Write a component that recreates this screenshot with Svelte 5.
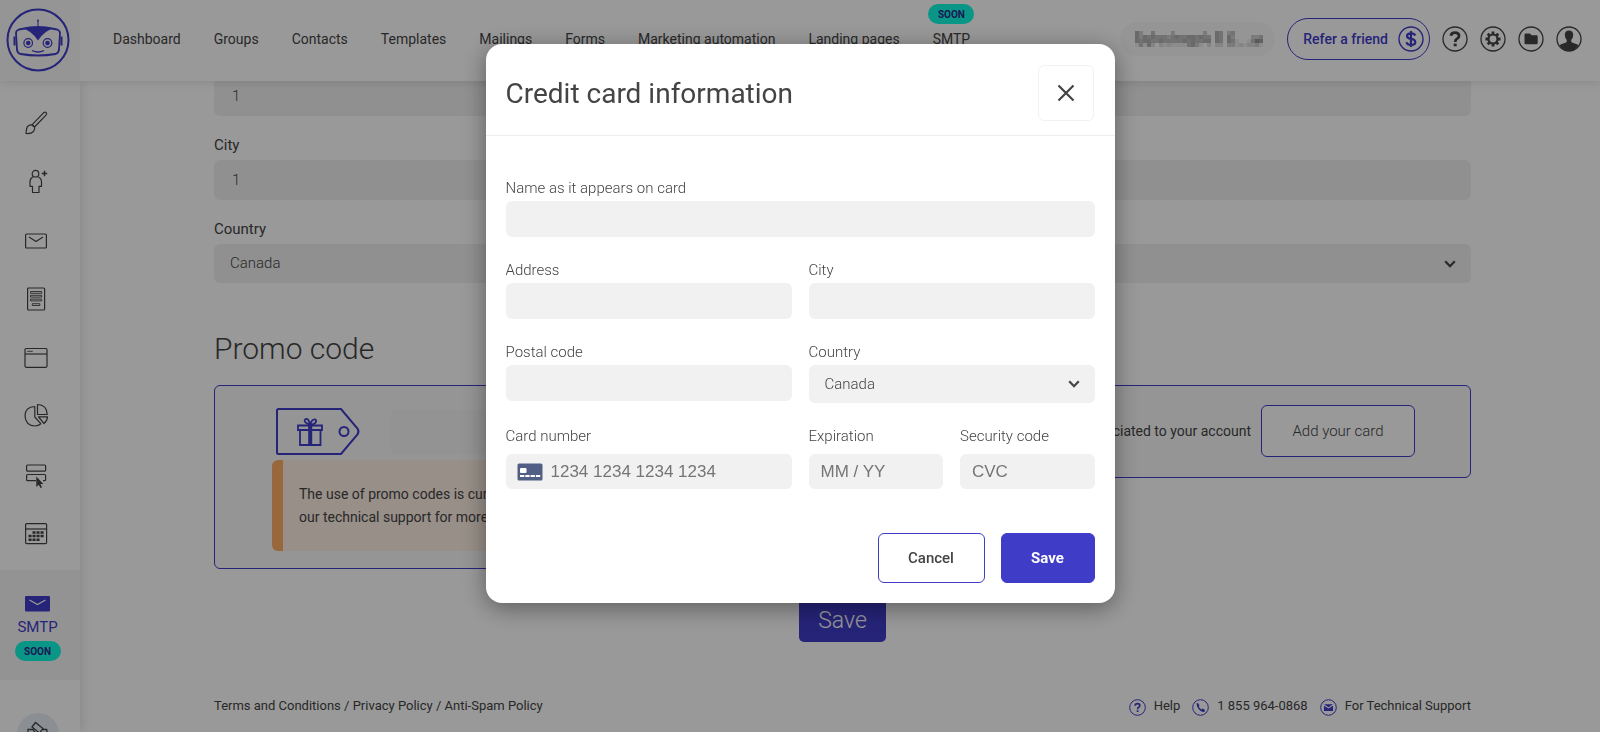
<script>
  const navItems = ['Dashboard', 'Groups', 'Contacts', 'Templates', 'Mailings', 'Forms', 'Marketing automation', 'Landing pages', 'SMTP'];
  const sideItems = ['design', 'contact', 'mail', 'form', 'window', 'chart', 'landing', 'calendar'];

  // Opacity levels (0-9) of the masked account name, one digit per cell.
  const mask = [
    '530040000300000003005403400000000',
    '535454443454455454405405300003340',
    '545544544444545445505405410014760',
    '141520212111145310202203312122310'
  ];
</script>

<div class="page">
  <header class="topbar">
    <a class="logo" href="#home" aria-label="Home">
      <svg width="66" height="66" viewBox="0 0 66 66" fill="none" stroke="#3f3cc8">
        <circle cx="33" cy="33" r="30.5" stroke-width="2" />
        <path d="M14 22.500Q33 18 52 22.500Q55 23.500 55 26L54 43Q53.500 46 50.500 47Q33 50 15.500 47Q12.500 46 12 43L11 26Q11 23.500 14 22.500Z" stroke-width="1.800" />
        <path d="M17 21.500Q33 17 49 21.500Q40 23 33 33.500Q26 23 17 21.500Z" fill="#3f3cc8" stroke="none" />
        <path d="M33 20V14" stroke-width="1" />
        <circle cx="33" cy="13.500" r="1" fill="#3f3cc8" stroke="none" />
        <circle cx="23.200" cy="36" r="4.300" stroke-width="1.200" />
        <circle cx="42.500" cy="36" r="4.300" stroke-width="1.200" />
        <circle cx="23.200" cy="36" r="2.300" fill="#3f3cc8" stroke="none" />
        <circle cx="42.500" cy="36" r="2.300" fill="#3f3cc8" stroke="none" />
        <path d="M27 43.500Q33 46.500 39 43.500" stroke-width="1.300" />
        <path d="M9.500 29.500V38.500M56.500 29.500V38.500" stroke-width="2" />
      </svg>
    </a>
    <nav class="menu">
      {#each navItems as item}
        <a href="#nav">{item}{#if item === 'SMTP'}<span class="soon above">SOON</span>{/if}</a>
      {/each}
    </nav>
    <div class="tools">
      <button class="account" aria-label="Account">
        <svg width="132" height="16" viewBox="0 0 132 16" shape-rendering="crispEdges">
          {#each mask as row, y}
            {#each row.split('') as level, x}
              <rect x={x * 4} y={y * 4} width="4" height="4" fill="#222" opacity={Number(level) / 15} />
            {/each}
          {/each}
        </svg>
      </button>
      <button class="refer">Refer a friend
        <svg width="26" height="26" viewBox="0 0 26 26" aria-hidden="true">
          <circle cx="13" cy="13" r="12" fill="none" stroke="#3f3cc8" stroke-width="1.400" />
          <path d="M17.300 9.500Q16.500 7.300 13 7.300Q9 7.300 9 10Q9 12.200 13 12.900Q17.300 13.600 17.300 16.200Q17.300 18.900 13 18.900Q9.200 18.900 8.500 16.200M13 5V21" fill="none" stroke="#3f3cc8" stroke-width="2.200" />
        </svg>
      </button>
      <button class="round" aria-label="Help">
        <svg width="26" height="26" viewBox="0 0 26 26" fill="none" stroke="#444">
          <circle cx="13" cy="13" r="12" stroke-width="1.300" />
          <path d="M8.900 9.800Q9.300 6.700 13 6.700Q17 6.700 17 9.900Q17 11.600 14.900 12.900Q13.200 14 13.200 16" stroke-width="2.800" />
          <path d="M11.700 17.600H14.700V20.300H11.700Z" fill="#444" stroke="none" />
        </svg>
      </button>
      <button class="round" aria-label="Settings">
        <svg width="26" height="26" viewBox="0 0 26 26" fill="none" stroke="#444">
          <circle cx="13" cy="13" r="12" stroke-width="1.300" />
          <circle cx="13" cy="13" r="4.500" stroke-width="2.200" />
          <path d="M13 5.500V8.500M13 17.500V20.500M5.500 13H8.500M17.500 13H20.500M7.700 7.700L9.800 9.800M16.200 16.200L18.300 18.300M18.300 7.700L16.200 9.800M9.800 16.200L7.700 18.300" stroke-width="2.800" />
        </svg>
      </button>
      <button class="round" aria-label="Files">
        <svg width="26" height="26" viewBox="0 0 26 26">
          <circle cx="13" cy="13" r="12" fill="none" stroke="#444" stroke-width="1.300" />
          <path d="M6.500 8.700Q6.500 7.500 7.700 7.500H11.500Q12.200 7.500 12.700 8.200L13.500 9.300H18.500Q19.700 9.300 19.700 10.500V17Q19.700 18.200 18.500 18.200H7.700Q6.500 18.200 6.500 17Z" fill="#444" />
        </svg>
      </button>
      <button class="round" aria-label="Profile">
        <svg width="26" height="26" viewBox="0 0 26 26">
          <circle cx="13" cy="13" r="12" fill="none" stroke="#444" stroke-width="1.300" />
          <path d="M13 4.500Q17.200 4.500 17.200 9Q17.200 12 15.200 14Q15 16 16 16.500L21.500 18.600Q22.300 19 22 20Q18.500 25 13 25Q7.500 25 4 20Q3.700 19 4.500 18.600L10 16.500Q11 16 10.800 14Q8.800 12 8.800 9Q8.800 4.500 13 4.500Z" fill="#444" />
        </svg>
      </button>
    </div>
  </header>

  <div class="body">
    <aside class="sidebar">
      <ul class="side-list">
        {#each sideItems as item}
          <li>
            <a href="#side" aria-label={item}>
              <svg width="26" height="26" viewBox="0 0 26 26" fill="none" stroke="#444" stroke-width="1.200" stroke-linejoin="round">
                {#if item === 'design'}
                  <path d="M9 14.800L20.500 2.800Q22 1.700 23.200 2.600Q24.200 3.700 23 5.200L11.500 17Z" />
                  <path d="M9 14.800Q5 14.500 3.800 18Q3.200 20.500 3 23.500Q8 24 10.500 21.500Q12.300 19.500 11.500 17Z" />
                {:else if item === 'contact'}
                  <circle cx="12.500" cy="4.700" r="3.300" />
                  <path d="M9.800 8Q7 9.300 7 13V17.300H9.500V23.500H16V17.300H18.500V13Q18.500 9.300 15.300 8" />
                  <path d="M18.700 4.500H24.200M21.500 1.800V7.200" stroke-width="1.500" />
                {:else if item === 'mail'}
                  <rect x="2.600" y="6" width="20.800" height="14" rx="1" />
                  <path d="M6 9L13 13.500L20 9" />
                {:else if item === 'form'}
                  <rect x="4.600" y="2" width="17" height="22" rx="1" />
                  <path d="M7.500 5.500H18.700V7.300H7.500ZM7.500 9.300H18.700V11.100H7.500ZM7.500 13.100H18.700V14.900H7.500ZM9.300 17.700H16.900V19.500H9.300Z" stroke-width=".9" />
                {:else if item === 'window'}
                  <rect x="2" y="3.500" width="22" height="18.800" rx="1.200" />
                  <path d="M2 9H24" />
                  <path d="M4.500 6.300H9.500" stroke-dasharray="1.300 .6" />
                {:else if item === 'chart'}
                  <path d="M11.800 3.500Q2 4 2 13Q2.500 22.500 12 23Q15.500 22.900 17.800 20.700L11.800 14Z" />
                  <path d="M14.500 1.500Q24 2 24.200 11.500H14.500Z" />
                  <path d="M15.500 13.800H24.500Q24.300 18 21 20.500Z" />
                {:else if item === 'landing'}
                  <rect x="3.600" y="3" width="19" height="6.200" rx="1" />
                  <path d="M13 18.700H4.600Q3.600 18.700 3.600 17.700V13.500Q3.600 12.500 4.600 12.500H21.600Q22.600 12.500 22.600 13.500V17.700Q22.600 18.700 20 18.700" />
                  <path d="M13.300 14.500V25L15.700 22.700L17.500 26L19 25.200L17.400 22H20.400Z" fill="#444" stroke="none" />
                {:else}
                  <rect x="2.600" y="2.600" width="21" height="20" rx="1" />
                  <path d="M2.600 8H23.600" />
                  <path d="M9.500 11.500H21M5.500 15H21M5.500 18.700H17" stroke-width="2.600" stroke-dasharray="3.100 .9" />
                {/if}
              </svg>
            </a>
          </li>
        {/each}
      </ul>
      <a class="smtp" href="#smtp">
        <svg width="26" height="17" viewBox="0 0 26 17" aria-hidden="true">
          <rect x="0" y="1" width="25" height="15.500" rx="1.200" fill="#3f3cc8" />
          <path d="M4.500 5L12.500 9.500L20.500 5" fill="none" stroke="#fff" stroke-width="1.200" />
        </svg>
        <span>SMTP</span>
        <span class="soon">SOON</span>
      </a>
      <a class="partner" href="#partner" aria-label="Partners">
        <svg width="26" height="26" viewBox="0 0 26 26" fill="none" stroke="#444" stroke-width="1.300">
          <path d="M7 6L10.500 1.500L18 7.500L14.500 12ZM3 8.500H8L11 13L8 16H3ZM22 8.500H17M22 8.500V16H18L13 20L8 16" />
        </svg>
      </a>
    </aside>

    <main class="main">
      <div class="field">
        <input aria-label="Address" value="1" />
      </div>
      <div class="field">
        <label for="bg-city">City</label>
        <input id="bg-city" value="1" />
      </div>
      <div class="field">
        <label for="bg-country">Country</label>
        <div class="select">
          <select id="bg-country"><option>Canada</option></select>
          <svg width="12" height="8" viewBox="0 0 12 8" aria-hidden="true"><path d="M1.200 1.200L6 6.200L10.800 1.200" fill="none" stroke="#444" stroke-width="2.200" /></svg>
        </div>
      </div>

      <h2>Promo code</h2>
      <div class="panels">
        <section class="panel promo">
          <div class="promo-row">
            <svg width="86" height="49" viewBox="0 0 86 49" fill="none" stroke="#3f3cc8" stroke-width="2" aria-hidden="true">
              <path d="M3.500 2H66L82.500 21.500Q84.500 24.500 82.500 27.500L66 47H3.500Q2 47 2 45.500V3.500Q2 2 3.500 2Z" />
              <circle cx="69" cy="24.500" r="4.500" />
              <path d="M23 18.500H47V23H23ZM25 23V38H45.500V23" stroke-width="1.800" />
              <path d="M35.200 18V38" stroke-width="4" />
              <path d="M35 18Q28 15 30 12.500Q33.500 10 35 18Q37 11.500 40.500 12.500Q43 16.500 35 18" stroke-width="1.800" />
            </svg>
            <input aria-label="Promo code" />
          </div>
          <p class="notice">The use of promo codes is currently unavailable. Contact<br />our technical support for more information.</p>
        </section>
        <section class="panel card">
          <span>associated to your account</span>
          <button class="add">Add your card</button>
        </section>
      </div>
      <button class="bg-save">Save</button>

      <footer>
        <div><a href="#terms">Terms and Conditions</a> / <a href="#privacy">Privacy Policy</a> / <a href="#spam">Anti-Spam Policy</a></div>
        <div class="support">
          <a href="#help">
            <svg width="17" height="17" viewBox="0 0 17 17" fill="none" stroke="#3f3cc8" aria-hidden="true"><circle cx="8.500" cy="8.500" r="7.800" /><path d="M6.200 6.700Q6.300 4.700 8.500 4.700Q10.800 4.700 10.800 6.500Q10.800 7.700 9.500 8.400Q8.600 9 8.600 10.200M8.600 11.300V12.900" stroke-width="1.700" /></svg>Help</a>
          <a href="#phone">
            <svg width="17" height="17" viewBox="0 0 17 17" fill="none" stroke="#3f3cc8" aria-hidden="true"><circle cx="8.500" cy="8.500" r="7.800" /><path d="M4.500 4.500L6 4L7.500 6.500L6.700 7.600Q7.700 9.500 9.600 10.400L10.600 9.600L13 11L12.500 12.700Q10.500 13.700 7.500 11Q4.500 8.300 4.500 4.500Z" fill="#3f3cc8" stroke="none" /></svg>1 855 964-0868</a>
          <a href="#support">
            <svg width="17" height="17" viewBox="0 0 17 17" fill="none" stroke="#3f3cc8" aria-hidden="true"><circle cx="8.500" cy="8.500" r="7.800" /><path d="M4 5.300H13L8.500 8.200ZM4 6.800L8.500 9.600L13 6.800V12H4Z" fill="#3f3cc8" stroke="none" /></svg>For Technical Support</a>
        </div>
      </footer>
    </main>
  </div>
</div>

<div class="overlay">
  <div class="modal" role="dialog" aria-modal="true" aria-labelledby="modal-title">
    <div class="modal-head">
      <h1 id="modal-title">Credit card information</h1>
      <button class="close" aria-label="Close">
        <svg width="18" height="18" viewBox="0 0 18 18"><path d="M1.500 1.500L16.500 16.500M16.500 1.500L1.500 16.500" stroke="#444" stroke-width="2.200" /></svg>
      </button>
    </div>
    <form class="modal-body">
      <div class="cell full"><label for="name">Name as it appears on card</label><input id="name" /></div>
      <div class="cell half"><label for="address">Address</label><input id="address" /></div>
      <div class="cell half"><label for="city">City</label><input id="city" /></div>
      <div class="cell half"><label for="postal">Postal code</label><input id="postal" /></div>
      <div class="cell half">
        <label for="country">Country</label>
        <div class="select">
          <select id="country"><option>Canada</option></select>
          <svg width="12" height="8" viewBox="0 0 12 8" aria-hidden="true"><path d="M1.200 1.200L6 6.200L10.800 1.200" fill="none" stroke="#444" stroke-width="2.200" /></svg>
        </div>
      </div>
      <div class="cell half pay">
        <label for="number">Card number</label>
        <div class="number">
          <svg width="26" height="18" viewBox="0 0 26 18" aria-hidden="true">
            <rect x=".5" y=".5" width="25" height="17" rx="1.500" fill="#525f85" />
            <rect x="3" y="5" width="6.500" height="5" rx="1" fill="#fff" />
            <path d="M3 13H24" stroke="#fff" stroke-width="2" stroke-dasharray="4.300 1" />
          </svg>
          <input id="number" placeholder="1234 1234 1234 1234" />
        </div>
      </div>
      <div class="cell pay"><label for="exp">Expiration</label><input id="exp" placeholder="MM / YY" /></div>
      <div class="cell pay"><label for="cvc">Security code</label><input id="cvc" placeholder="CVC" /></div>
    </form>
    <div class="modal-foot">
      <button class="cancel">Cancel</button>
      <button class="save">Save</button>
    </div>
  </div>
</div>

<style>
  :global(body) { margin: 0; overflow: hidden; }
  .page, .overlay { font-family: Roboto, "Liberation Sans", sans-serif; font-size: 14px; color: #444; box-sizing: border-box; }
  .page *, .overlay * { box-sizing: border-box; }
  button, input, select { font: inherit; color: inherit; margin: 0; min-width: 0; }
  button { cursor: pointer; padding: 0; background: none; border: 0; }
  a { color: inherit; text-decoration: none; }
  svg { display: block; flex: none; }
  input, select { width: 100%; border: 0; border-radius: 6px; background: #f1f1f1; outline: 0; }

  .page { display: flex; flex-direction: column; height: 100vh; background: #fff; overflow: hidden; }
  .topbar { display: flex; align-items: center; height: 81px; flex: none; background: #fff; box-shadow: 0 0 10px rgba(0, 0, 0, .14); z-index: 2; }
  .logo { width: 80px; height: 81px; padding: 7px 5px; background: #f8f8f8; }
  .menu { display: flex; gap: 33px; padding: 0 0 4px 33px; white-space: nowrap; }
  .menu a { position: relative; line-height: 20px; }
  .soon { width: 46px; height: 20px; border-radius: 10px; background: #10fae0; color: #2b2a8c; font-size: 10px; line-height: 21px; font-weight: 700; text-align: center; }
  .above { position: absolute; left: 50%; bottom: 25px; margin-left: -23px; }
  .tools { display: flex; align-items: center; gap: 12px; margin-left: auto; padding: 0 18px 4px 0; }
  .account { padding: 9px 8px 9px 15px; border-radius: 17px; background: #f9f9f9; }
  .refer { display: flex; align-items: center; gap: 10px; padding: 7px 5px 7px 15px; border: 1px solid #3f3cc8; border-radius: 22px; color: #3f3cc8; font-weight: 500; white-space: nowrap; }

  .body { display: flex; flex: 1; min-height: 0; }
  .sidebar { width: 80px; flex: none; background: #fff; box-shadow: 0 0 12px rgba(0, 0, 0, .14); overflow: hidden; z-index: 1; }
  .side-list { display: grid; grid-auto-rows: 1fr; height: 469px; padding: 0; list-style: none; margin: 13px 0 7px; }
  .side-list li { display: flex; align-items: center; padding-left: 23px; }
  .smtp { display: flex; flex-direction: column; align-items: center; height: 110px; padding: 25px 5px 0 0; background: #f6f6f6; color: #3f3cc8; font-size: 15px; }
  .smtp > span:first-of-type { line-height: 22px; margin: 4px 0 3px; }
  .partner { display: flex; justify-content: center; width: 42px; height: 42px; margin: 33px 0 0 17px; padding-top: 8px; border-radius: 50%; background: #e8edf4; }

  .main { flex: 1; min-width: 0; padding: 0 129px 0 134px; }
  .field { margin-bottom: 19px; font-size: 15px; }
  .field:first-child { margin-top: -5px; }
  .field label { display: block; line-height: 20px; margin-bottom: 5px; }
  .field input { display: block; height: 40px; padding: 0 18px; font-weight: 300; }
  .select { position: relative; }
  .select select { display: block; height: 39px; padding: 0 16px; appearance: none; font-weight: 300; font-size: 15px; }
  .field .select select { padding-bottom: 2px; }
  .select svg { position: absolute; right: 15px; top: 50%; margin-top: -4px; pointer-events: none; }
  h2 { margin: 46px 0 16px; font-size: 30px; line-height: 40px; font-weight: 300; }
  .panels { display: grid; grid-template-columns: 1fr 1fr; gap: 24px; align-items: start; }
  .panel { border: 1px solid #3f3cc8; border-radius: 6px; background: #f9f9f9; min-width: 0; }
  .promo { padding: 21px 57px 17px; }
  .promo-row { display: flex; align-items: center; gap: 29px; padding-left: 3px; }
  .promo-row input { height: 44px; background: #f5f5f5; }
  .notice { margin: 4px 0 0; padding: 23px 16px 22px; border-left: 11px solid #ffac65; border-radius: 6px; background: #fdeee3; line-height: 23px; white-space: nowrap; overflow: hidden; }
  .card { display: flex; align-items: center; justify-content: flex-end; gap: 10px; padding: 19px 55px 20px 20px; }
  .add { width: 154px; height: 52px; border: 1px solid #3f3cc8; border-radius: 6px; background: #fff; font-size: 15px; font-weight: 300; }
  .bg-save { display: block; height: 44px; margin: 29px auto 54px; padding: 0 19px; border-radius: 5px; background: #3f3cc8; color: #fff; font-size: 23px; font-weight: 300; }
  footer { display: flex; justify-content: space-between; line-height: 20px; font-size: 13px; white-space: nowrap; }
  .support { display: flex; gap: 12px; }
  .support a { display: flex; gap: 8px; }
  .support svg { margin-top: 3px; }

  .overlay { position: fixed; inset: 0; z-index: 10; display: flex; justify-content: center; align-items: flex-start; padding-top: 44px; background: rgba(0, 0, 0, .4); }
  .modal { width: 629px; max-width: 100%; border-radius: 16px; background: #fff; box-shadow: 0 5px 24px rgba(0, 0, 0, .4); }
  .modal-head { display: flex; align-items: center; justify-content: space-between; padding: 21px 21px 14px 20px; border-bottom: 1px solid #eee; }
  h1 { margin: 0; padding-top: 2px; font-size: 28px; line-height: 36px; font-weight: 400; }
  .close { display: grid; place-items: center; width: 56px; height: 56px; border: 1px solid #f2f2f2; border-radius: 6px; }
  .modal-body { display: grid; grid-template-columns: repeat(4, 1fr); gap: 23px 17px; padding: 42px 20px 44px; font-size: 15px; }
  .full { grid-column: span 4; }
  .half { grid-column: span 2; }
  .cell { min-width: 0; }
  .cell label { display: block; margin-bottom: 3px; line-height: 20px; font-weight: 300; }
  .cell input { display: block; height: 36px; padding: 0 12px; }
  .cell .select select { height: 38px; }
  .cell.pay label { margin-bottom: 8px; }
  .cell.pay input { height: 35px; font-family: "Liberation Sans", Arial, sans-serif; font-size: 17px; }
  .number { display: flex; align-items: center; padding-left: 11px; border-radius: 6px; background: #f1f1f1; }
  .number input { padding-left: 8px; }
  ::placeholder { color: #757575; opacity: 1; }
  .modal-foot { display: flex; justify-content: flex-end; gap: 16px; padding: 0 20px 20px; font-weight: 500; }
  .modal-foot button { height: 50px; border: 1px solid #3f3cc8; border-radius: 6px; font-size: 15px; }
  .cancel { width: 107px; }
  .modal-foot .save { width: 94px; background: #3f3cc8; color: #fff; font-weight: 700; }
</style>
